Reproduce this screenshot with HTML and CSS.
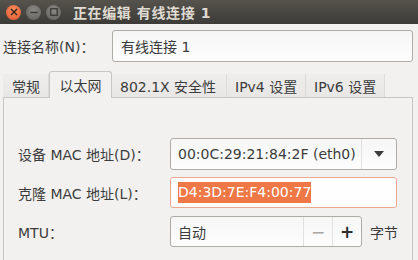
FILE: index.html
```html
<!DOCTYPE html>
<html lang="zh-CN">
<head>
    <meta charset="UTF-8">
    <title>正在编辑 有线连接 1</title>
    <link rel="stylesheet" href="styles.css">
</head>
<body>
    <div class="titlebar">
        <div class="win-buttons">
            <span class="wbtn close">
                <svg width="8" height="8" viewBox="0 0 8 8"><path d="M1 1L7 7M7 1L1 7" stroke="#3c2a20" stroke-width="1.5"/></svg>
            </span>
            <span class="wbtn">
                <svg width="8" height="8" viewBox="0 0 8 8"><path d="M0.5 4.5H7.5" stroke="#3a3935" stroke-width="1.5"/></svg>
            </span>
            <span class="wbtn">
                <svg width="8" height="8" viewBox="0 0 8 8"><rect x="0.75" y="0.75" width="6.5" height="6.5" fill="none" stroke="#3a3935" stroke-width="1.3"/></svg>
            </span>
        </div>
        <div class="title">正在编辑 有线连接 1</div>
    </div>

    <div class="content">
        <div class="name-row">
            <label class="lbl">连接名称(N)：</label>
            <div class="entry name-entry">有线连接 1</div>
        </div>

        <div class="notebook">
            <div class="tabs">
                <div class="tab">常规</div>
                <div class="tab active">以太网</div>
                <div class="tab">802.1X 安全性</div>
                <div class="tab">IPv4 设置</div>
                <div class="tab">IPv6 设置</div>
            </div>
            <div class="page">
                <div class="form">
                    <label class="lbl">设备 MAC 地址(D)：</label>
                    <div class="entry combo">
                        <span class="combo-text">00:0C:29:21:84:2F (eth0)</span>
                        <span class="combo-btn">
                            <svg width="10" height="8" viewBox="0 0 10 8"><path d="M0 1H10L5 7Z" fill="#3c3c3c"/></svg>
                        </span>
                    </div>

                    <label class="lbl">克隆 MAC 地址(L)：</label>
                    <div class="entry focused"><span class="selected">D4:3D:7E:F4:00:77</span></div>

                    <label class="lbl">MTU：</label>
                    <div class="spin-row">
                        <div class="entry spin">
                            <span class="spin-text">自动</span>
                            <span class="spin-btn minus">−</span>
                            <span class="spin-btn plus">+</span>
                        </div>
                        <span class="unit">字节</span>
                    </div>
                </div>
            </div>
        </div>
    </div>
</body>
</html>
```

FILE: styles.css
```css
/* Global */
* {
    margin: 0;
    padding: 0;
    box-sizing: border-box;
}

body {
    width: 418px;
    height: 260px;
    overflow: hidden;
    background-color: #f2f1f0;
    font-family: "DejaVu Sans", "Noto Sans CJK SC", sans-serif;
    font-size: 14px;
    color: #3c3c3c;
    white-space: nowrap;
}

/* Title bar */
.titlebar {
    height: 24px;
    display: flex;
    align-items: center;
    background: linear-gradient(#56534d, #3c3b37);
    padding-left: 6px;
}

.win-buttons {
    display: flex;
    gap: 5px;
}

.wbtn {
    width: 15px;
    height: 15px;
    border-radius: 50%;
    background: radial-gradient(circle at 50% 35%, #8a8984, #5f5e5a);
    display: flex;
    align-items: center;
    justify-content: center;
}

.wbtn.close {
    background: radial-gradient(circle at 50% 35%, #f88c5e, #e0572a);
}

.title {
    margin-left: 12px;
    color: #dfdbd2;
    font-weight: bold;
    font-size: 14px;
    letter-spacing: 0.6px;
}

/* Content */
.content {
    padding: 6px 5px 0 3px;
}

.name-row {
    display: flex;
    align-items: center;
}

.name-row .lbl {
    width: 109px;
}

.entry {
    height: 31px;
    background: linear-gradient(#f6f6f6, #fdfdfd);
    border: 1px solid #aeaca7;
    border-radius: 3px;
    display: flex;
    align-items: center;
    padding-left: 7px;
    color: #3c3c3c;
}

.name-entry {
    flex: 1;
    height: 32px;
    padding-left: 8px;
}

/* Notebook */
.notebook {
    margin-top: 8px;
}

.tabs {
    display: flex;
    align-items: flex-end;
    height: 27px;
}

.tab {
    height: 23px;
    padding: 0 8px;
    display: flex;
    align-items: center;
    background: linear-gradient(#eeedeb, #e8e7e5);
    border-right: 1px solid #dedcd9;
}

.tab:first-child {
    padding-left: 9px;
    width: 46px;
}

.tab.active {
    height: 27px;
    width: 63px;
    justify-content: center;
    background: #f2f1f0;
    border: 1px solid #c8c6c2;
    border-bottom: none;
    border-radius: 3px 3px 0 0;
    margin-bottom: -1px;
    position: relative;
}

.tab:nth-child(3) {
    width: 115px;
}

.tab:nth-child(4) {
    width: 79px;
}

.tab:nth-child(5) {
    width: 79px;
}

.page {
    height: 170px;
    border: 1px solid #c8c6c2;
    background: #f2f1f0;
    padding: 40px 0 0 14px;
}

.form {
    display: grid;
    grid-template-columns: 152px 227px;
    grid-auto-rows: 31px;
    row-gap: 8px;
    align-items: center;
}

.combo {
    height: 32px;
    padding-right: 0;
    justify-content: space-between;
}

.combo-btn {
    width: 35px;
    height: 100%;
    border-left: 1px solid #e2e1de;
    display: flex;
    align-items: center;
    justify-content: center;
}

.focused {
    border-color: #eca88e;
    background: #fefefe;
}

.selected {
    background: #f07746;
    color: #ffffff;
    line-height: 21px;
}

/* Spin button */
.spin-row {
    display: flex;
    align-items: center;
    gap: 8px;
}

.spin {
    width: 192px;
    flex-shrink: 0;
    padding-right: 0;
}

.spin-text {
    flex: 1;
}

.spin-btn {
    width: 29px;
    height: 100%;
    border-left: 1px solid #e2e1de;
    display: flex;
    align-items: center;
    justify-content: center;
    font-size: 17px;
}

.spin-btn.minus {
    color: #a8a7a4;
}

.spin-btn.plus {
    color: #2e2e2e;
    font-weight: bold;
}
```
